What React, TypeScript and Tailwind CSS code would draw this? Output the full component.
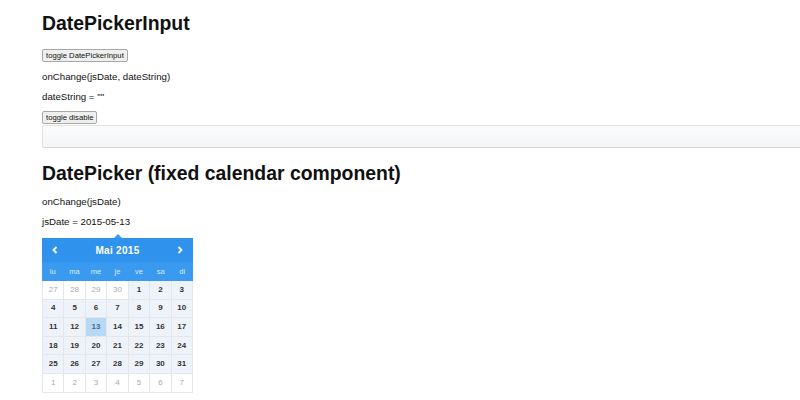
import React from "react";

const WEEKDAYS = ["lu", "ma", "me", "je", "ve", "sa", "di"];

type Day = { n: number; cur: boolean };

function buildWeeks(): Day[][] {
	const days: Day[] = [];
	[27, 28, 29, 30].forEach((n) => days.push({ n, cur: false }));
	for (let n = 1; n <= 31; n++) days.push({ n, cur: true });
	for (let n = 1; n <= 7; n++) days.push({ n, cur: false });
	const weeks: Day[][] = [];
	for (let i = 0; i < days.length; i += 7) weeks.push(days.slice(i, i + 7));
	return weeks;
}

const SELECTED = 13;

function Calendar() {
	const weeks = buildWeeks();
	return (
		<div className="relative mt-[9px] w-[151px]">
			{/* little pointer on top */}
			<div className="absolute left-1/2 top-[-4px] h-0 w-0 -translate-x-1/2 border-x-[4px] border-b-[4px] border-x-transparent border-b-[#3a9af0]" />
			<div className="flex h-[24px] items-center justify-between bg-[#2f92ec] px-[10px] text-white">
				<svg width="6" height="8" viewBox="0 0 6 8">
					<path d="M4.5 1 L1.5 4 L4.5 7" fill="none" stroke="white" strokeWidth="1.8" />
				</svg>
				<span className="text-[10px] font-bold tracking-[0.3px]">Mai 2015</span>
				<svg width="6" height="8" viewBox="0 0 6 8">
					<path d="M1.5 1 L4.5 4 L1.5 7" fill="none" stroke="white" strokeWidth="1.8" />
				</svg>
			</div>
			<div className="grid h-[19px] grid-cols-7 items-center bg-[#3a9af0] text-center text-[7.5px] text-[#dcecfc]">
				{WEEKDAYS.map((d) => (
					<span key={d}>{d}</span>
				))}
			</div>
			<div className="border-l border-[#e3e7ec]">
				{weeks.map((w, i) => (
					<div key={i} className="grid h-[18.6px] grid-cols-7">
						{w.map((d, j) => {
							const sel = d.cur && d.n === SELECTED;
							return (
								<div
									key={j}
									className={
										"flex items-center justify-center border-b border-r border-[#e3e7ec] text-[8px] " +
										(sel
											? "bg-[#b9d8f4] font-bold text-[#3a6e9e]"
											: d.cur
												? "bg-[#eef3f9] font-bold text-[#333]"
												: "bg-white text-[#aaa]")
									}
								>
									{d.n}
								</div>
							);
						})}
					</div>
				))}
			</div>
		</div>
	);
}

function Btn({ children }: { children: React.ReactNode }) {
	return (
		<button className="h-[13px] rounded-[2px] border border-[#a8a8a8] bg-[#efefef] px-[3px] text-[7.7px] leading-[11px] text-[#111]">
			{children}
		</button>
	);
}

export default function App() {
	return (
		<div className="h-[400px] w-[800px] overflow-hidden bg-white pl-[42px] font-['Liberation_Sans',Arial,sans-serif] text-[#111]">
			<h1 className="pt-[11px] text-[19.4px] font-bold leading-[24px]">DatePickerInput</h1>
			<div className="mt-[14px] flex">
				<Btn>toggle DatePickerInput</Btn>
			</div>
			<p className="mt-[8px] text-[9.7px] leading-[14px]">onChange(jsDate, dateString)</p>
			<p className="mt-[6px] text-[9.7px] leading-[14px]">dateString = ""</p>
			<div className="mt-[7px] flex">
				<Btn>toggle disable</Btn>
			</div>
			<div className="mt-[1px] h-[23px] rounded-l-[2px] border border-r-0 border-[#e2e2e2] border-b-[#d4d4d6] bg-gradient-to-b from-[#fbfbfc] to-[#f4f5f7]" />
			<h2 className="mt-[13px] text-[19.4px] font-bold leading-[24px]">
				DatePicker (fixed calendar component)
			</h2>
			<p className="mt-[10px] text-[9.7px] leading-[14px]">onChange(jsDate)</p>
			<p className="mt-[6px] text-[9.7px] leading-[14px]">jsDate = 2015-05-13</p>
			<Calendar />
		</div>
	);
}
